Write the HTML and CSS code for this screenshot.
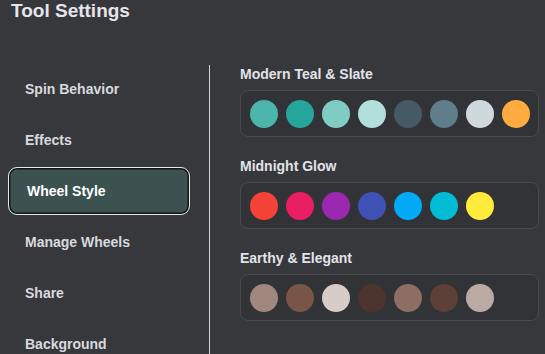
FILE: index.html
```html
<!DOCTYPE html>
<html lang="en">
<head>
    <meta charset="UTF-8">
    <meta name="viewport" content="width=device-width, initial-scale=1.0">
    <title>Tool Settings</title>
    <link rel="stylesheet" href="styles.css">
</head>
<body>
    <div class="page">
        <h1 class="page-title">Tool Settings</h1>
        <div class="settings">
            <nav class="sidebar">
                <div class="nav-item">Spin Behavior</div>
                <div class="nav-item">Effects</div>
                <div class="nav-item active">Wheel Style</div>
                <div class="nav-item">Manage Wheels</div>
                <div class="nav-item">Share</div>
                <div class="nav-item">Background</div>
            </nav>
            <div class="content">
                <div class="palette-group">
                    <h2 class="palette-name">Modern Teal &amp; Slate</h2>
                    <div class="palette">
                        <span class="swatch" style="background: #4db6ac;"></span>
                        <span class="swatch" style="background: #26a69a;"></span>
                        <span class="swatch" style="background: #80cbc4;"></span>
                        <span class="swatch" style="background: #b2dfdb;"></span>
                        <span class="swatch" style="background: #455a64;"></span>
                        <span class="swatch" style="background: #607d8b;"></span>
                        <span class="swatch" style="background: #cfd8dc;"></span>
                        <span class="swatch" style="background: #ffab40;"></span>
                    </div>
                </div>
                <div class="palette-group">
                    <h2 class="palette-name">Midnight Glow</h2>
                    <div class="palette">
                        <span class="swatch" style="background: #f44336;"></span>
                        <span class="swatch" style="background: #e91e63;"></span>
                        <span class="swatch" style="background: #9c27b0;"></span>
                        <span class="swatch" style="background: #3f51b5;"></span>
                        <span class="swatch" style="background: #03a9f4;"></span>
                        <span class="swatch" style="background: #00bcd4;"></span>
                        <span class="swatch" style="background: #ffeb3b;"></span>
                    </div>
                </div>
                <div class="palette-group">
                    <h2 class="palette-name">Earthy &amp; Elegant</h2>
                    <div class="palette">
                        <span class="swatch" style="background: #a1887f;"></span>
                        <span class="swatch" style="background: #795548;"></span>
                        <span class="swatch" style="background: #d7ccc8;"></span>
                        <span class="swatch" style="background: #4e342e;"></span>
                        <span class="swatch" style="background: #8d6e63;"></span>
                        <span class="swatch" style="background: #5d4037;"></span>
                        <span class="swatch" style="background: #bcaaa4;"></span>
                    </div>
                </div>
            </div>
        </div>
    </div>
</body>
</html>
```

FILE: styles.css
```css
* {
    margin: 0;
    padding: 0;
    box-sizing: border-box;
}

body {
    font-family: "Liberation Sans", Arial, sans-serif;
    background-color: #37383c;
    color: #e2e3e8;
    overflow: hidden;
}

.page {
    height: 354px;
    display: flex;
    flex-direction: column;
}

.page-title {
    font-size: 19px;
    font-weight: bold;
    line-height: 22px;
    padding: 0 0 0 11px;
    height: 65px;
    flex-shrink: 0;
    color: #e4e6ec;
}

.settings {
    display: flex;
    flex: 1;
    min-height: 0;
}

.sidebar {
    width: 210px;
    flex-shrink: 0;
    padding: 0 19px 0 8px;
    border-right: 1px solid #d6d6d8;
    display: flex;
    flex-direction: column;
    gap: 3px;
}

.nav-item {
    height: 48px;
    flex-shrink: 0;
    display: flex;
    align-items: center;
    padding-left: 16px;
    font-size: 14px;
    font-weight: bold;
    color: #d9dade;
    border: 1px solid transparent;
    border-radius: 9px;
}

.nav-item.active {
    background-color: #3c5250;
    color: #ffffff;
    padding-left: 18px;
    border-color: #e6e8ea;
    box-shadow: inset 0 0 0 1.5px #141616;
}

.content {
    padding-left: 30px;
    display: flex;
    flex-direction: column;
    gap: 20px;
}

.palette-name {
    font-size: 14px;
    font-weight: bold;
    line-height: 16px;
    height: 24px;
    margin-top: 1px;
    color: #e2e3e8;
}

.palette {
    width: 299px;
    height: 47px;
    display: flex;
    align-items: center;
    gap: 8px;
    padding: 0 9px;
    border: 1.5px solid #4a4b50;
    border-radius: 8px;
    background-color: #323337;
}

.swatch {
    width: 28px;
    height: 28px;
    border-radius: 50%;
    flex-shrink: 0;
}
```
